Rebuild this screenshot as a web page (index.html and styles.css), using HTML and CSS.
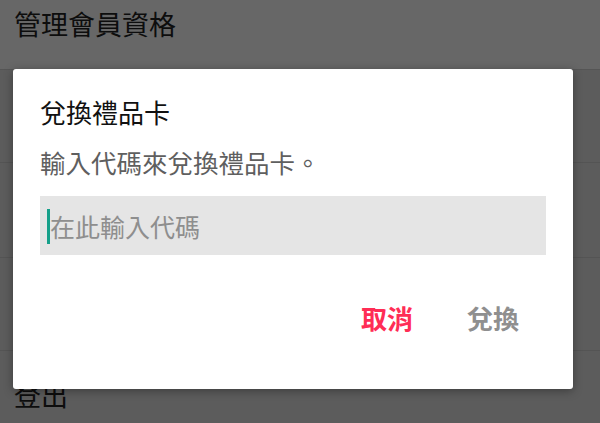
FILE: index.html
```html
<!DOCTYPE html>
<html lang="zh-Hant">
<head>
<meta charset="utf-8">
<title>兌換禮品卡</title>
<link rel="stylesheet" href="styles.css">
</head>
<body>
<div class="page">
  <header class="page-header">管理會員資格</header>
  <div class="row"></div>
  <div class="row"></div>
  <div class="row"></div>
  <div class="row row-logout">登出</div>
</div>
<div class="dialog" role="dialog">
  <h1 class="dialog-title">兌換禮品卡</h1>
  <p class="dialog-text">輸入代碼來兌換禮品卡。</p>
  <div class="field">
    <span class="caret"></span>
    <span class="placeholder">在此輸入代碼</span>
  </div>
  <div class="actions">
    <button class="btn btn-cancel">取消</button>
    <button class="btn btn-ok">兌換</button>
  </div>
</div>
</body>
</html>
```

FILE: styles.css
```css
html, body {
  margin: 0;
  padding: 0;
}
body {
  width: 600px;
  height: 423px;
  overflow: hidden;
  position: relative;
  background: #5c5c5c;
  font-family: "Noto Sans CJK TC", "Noto Sans", sans-serif;
}
.page {
  display: flex;
  flex-direction: column;
}
.page-header {
  height: 70px;
  box-sizing: border-box;
  background: #676767;
  border-bottom: 1px solid #555555;
  color: #0d0d0d;
  font-size: 27px;
  line-height: 30px;
  padding: 9px 0 0 14px;
}
.row {
  height: 93px;
  box-sizing: border-box;
  border-bottom: 1px solid #545454;
  background: #5c5c5c;
}
.row:nth-child(3) { height: 95px; }
.row-logout {
  color: #0d0d0d;
  font-size: 27px;
  line-height: 30px;
  padding: 29px 0 0 14px;
  border-bottom: none;
}
.dialog {
  position: absolute;
  left: 13px;
  top: 69px;
  width: 560px;
  height: 320px;
  box-sizing: border-box;
  background: #ffffff;
  border-radius: 3px;
  box-shadow: 0 2px 10px rgba(0, 0, 0, 0.35);
  padding: 28px 27px 0 27px;
  display: flex;
  flex-direction: column;
}
.dialog-title {
  margin: 0;
  font-size: 26px;
  font-weight: 400;
  line-height: 30px;
  color: #111111;
}
.dialog-text {
  margin: 20px 0 0 0;
  font-size: 25.5px;
  line-height: 30px;
  color: #5f5f5f;
}
.field {
  margin-top: 19px;
  height: 59px;
  background: #e5e5e5;
  display: flex;
  align-items: center;
  padding-left: 7px;
}
.caret {
  width: 3px;
  height: 35px;
  background: #16a08a;
  margin-top: 2px;
}
.placeholder {
  font-size: 25px;
  line-height: 30px;
  color: #8e8e8e;
}
.actions {
  display: flex;
  justify-content: flex-end;
  margin-top: 48px;
}
.btn {
  border: none;
  background: none;
  font-family: inherit;
  font-size: 26px;
  font-weight: 700;
  line-height: 30px;
  padding: 0 27px;
  cursor: pointer;
}
.btn-cancel { color: #ff2d55; }
.btn-ok { color: #8f8f8f; }
```
